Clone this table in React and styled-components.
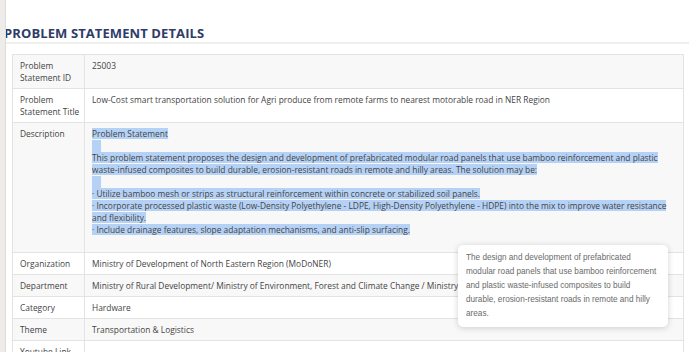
import React from 'react';
import styled, { createGlobalStyle } from 'styled-components';

const GlobalStyle = createGlobalStyle`
  body {
    margin: 0;
    background: #fff;
    font-family: "Open Sans", "Liberation Sans", sans-serif;
  }
`;

const Page = styled.div`
  position: relative;
  display: flex;
  width: 694px;
  height: 352px;
  overflow: hidden;
`;

const SideStrip = styled.div`
  width: 5px;
  flex-shrink: 0;
  background: #edece9;
  border-right: 1px solid #dddcd8;
`;

const Main = styled.div`
  flex: 1;
  overflow: hidden;
  padding: 25px 5px 0 0;
`;

const Heading = styled.h2`
  margin: 0 0 0 -2px;
  padding-bottom: 1px;
  font-size: 13px;
  line-height: 16px;
  font-weight: 700;
  color: #2f3b69;
  letter-spacing: 0.1px;
  border-bottom: 2px solid #efefef;
`;

const Table = styled.table`
  margin: 10px 0 0 6px;
  width: 672px;
  table-layout: fixed;
  border-collapse: collapse;
  border: 1px solid #e3e3e3;
  font-size: 8.4px;
  line-height: 12px;
  color: #444;
`;

const Row = styled.tr`
  background: ${props => (props.striped ? '#f8f8f8' : '#fff')};
  border-bottom: 1px solid #e3e3e3;
`;

const Label = styled.td`
  width: 57px;
  padding: 5px 7px 4px;
  vertical-align: top;
  white-space: nowrap;
  border-right: 1px solid #e3e3e3;
`;

const Value = styled.td`
  padding: 5px 7px 4px;
  vertical-align: top;
  white-space: ${props => (props.nowrap ? 'nowrap' : 'normal')};
`;

const Line = styled.div`
  min-height: 12px;
  white-space: nowrap;
`;

const Mark = styled.span`
  background: #b5d2f6;
`;

const EmptyMark = styled.span`
  display: inline-block;
  width: 9px;
  height: 12px;
  vertical-align: top;
  background: #b5d2f6;
`;

const Tooltip = styled.div`
  position: absolute;
  left: 458px;
  top: 245px;
  width: 194px;
  padding: 6px 8px 6px 8px;
  background: #fff;
  border-radius: 5px;
  box-shadow: 0 1px 6px rgba(0, 0, 0, 0.18);
  font-family: "Liberation Sans", Arial, sans-serif;
  font-size: 8.2px;
  line-height: 14px;
  color: #6a6a6a;
`;

const TipLine = styled.div`
  white-space: nowrap;
`;

const rows = [
  { label: ['Problem', 'Statement ID'], value: '25003' },
  { label: ['Problem', 'Statement Title'], value: 'Low-Cost smart transportation solution for Agri produce from remote farms to nearest motorable road in NER Region' },
  { label: ['Description'], description: true },
  { label: ['Organization'], value: 'Ministry of Development of North Eastern Region (MoDoNER)' },
  { label: ['Department'], value: 'Ministry of Rural Development/ Ministry of Environment, Forest and Climate Change / Ministry of Road Transport and Highways', nowrap: true },
  { label: ['Category'], value: 'Hardware' },
  { label: ['Theme'], value: 'Transportation & Logistics' },
  { label: ['Youtube Link'], value: '' },
];

const descriptionLines = [
  'Problem Statement',
  '',
  'This problem statement proposes the design and development of prefabricated modular road panels that use bamboo reinforcement and plastic',
  'waste-infused composites to build durable, erosion-resistant roads in remote and hilly areas. The solution may be:',
  '',
  '· Utilize bamboo mesh or strips as structural reinforcement within concrete or stabilized soil panels.',
  '· Incorporate processed plastic waste (Low-Density Polyethylene - LDPE, High-Density Polyethylene - HDPE) into the mix to improve water resistance',
  'and flexibility.',
  '· Include drainage features, slope adaptation mechanisms, and anti-slip surfacing.',
];

const tooltipLines = [
  'The design and development of prefabricated',
  'modular road panels that use bamboo reinforcement',
  'and plastic waste-infused composites to build',
  'durable, erosion-resistant roads in remote and hilly',
  'areas.',
];

const Description = () => (
  <>
    {descriptionLines.map((line, index) => (
      <Line key={index}>
        {line ? <Mark>{line}</Mark> : <EmptyMark />}
      </Line>
    ))}
    <Line />
  </>
);

const App = () => (
  <Page>
    <GlobalStyle />
    <SideStrip />
    <Main>
      <Heading>PROBLEM STATEMENT DETAILS</Heading>
      <Table>
        <tbody>
          {rows.map((row, index) => (
            <Row key={row.label.join(' ')} striped={index % 2 === 0}>
              <Label>
                {row.label.map(part => <div key={part}>{part}</div>)}
              </Label>
              <Value nowrap={row.nowrap}>
                {row.description ? <Description /> : row.value}
              </Value>
            </Row>
          ))}
        </tbody>
      </Table>
    </Main>
    <Tooltip>
      {tooltipLines.map(line => <TipLine key={line}>{line}</TipLine>)}
    </Tooltip>
  </Page>
);

export default App;
